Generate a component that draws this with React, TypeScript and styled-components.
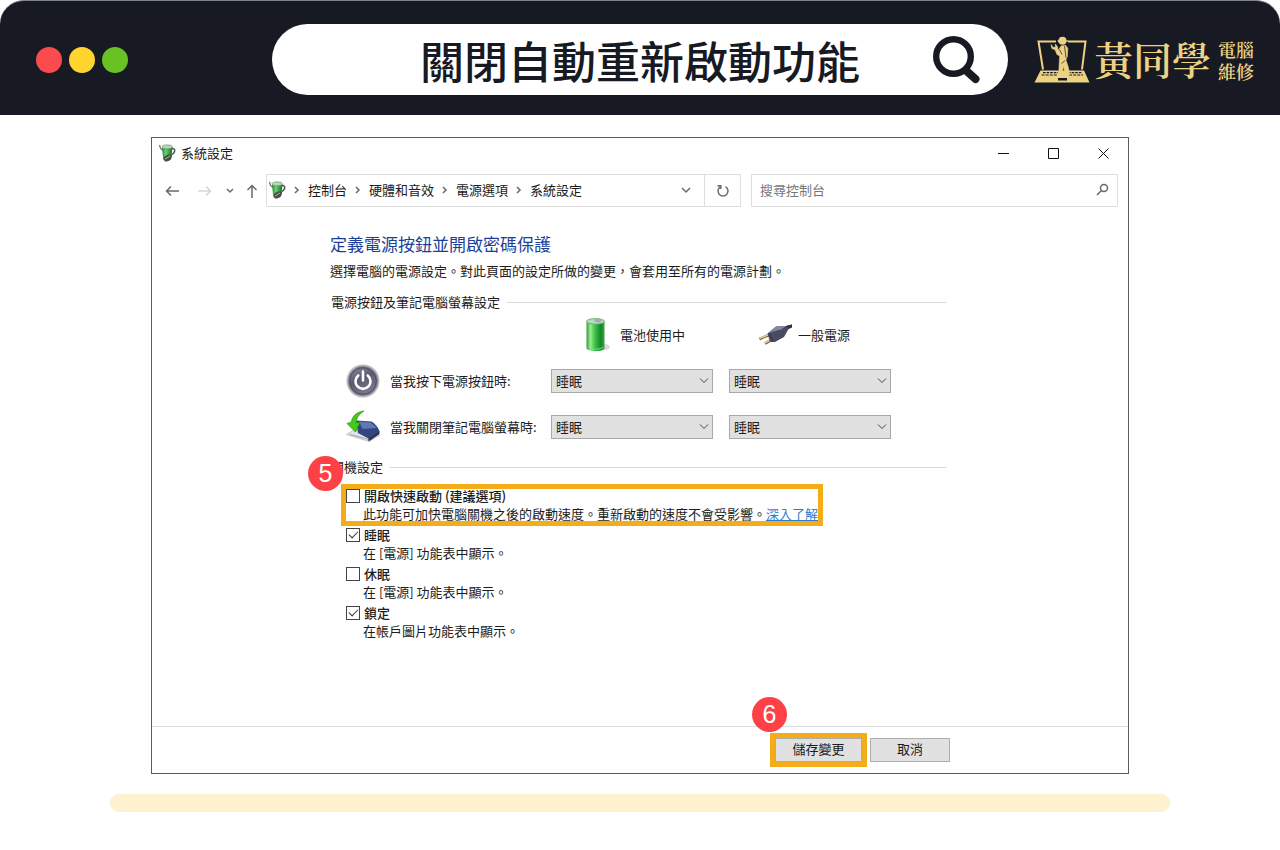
import React, { useId, useState } from "react";
import styled, { createGlobalStyle, css } from "styled-components";

const ink = "#171a23";
const gold = "#ecd282";
const amber = "#f4ac18";

const GlobalStyle = createGlobalStyle`
  *, *::before, *::after { box-sizing: border-box; }
  body {
    margin: 0;
    background: #fff;
    color: #1c1c1c;
    font: 13px/18px "Noto Sans CJK TC", "Liberation Sans", sans-serif;
  }
  h1, h2, p { margin: 0; font-weight: 400; }
  button, input, select { font: inherit; color: inherit; margin: 0; }
  svg { display: block; flex: none; }
`;

/* ---------- page banner ---------- */

const Banner = styled.header`
  display: flex;
  align-items: center;
  height: 115px;
  padding: 3px 26px 0 36px;
  background: ${ink};
  border-top: 1px solid #7b838b;
  border-radius: 24px 24px 0 0;
`;

const Lights = styled.div`
  display: flex;
  gap: 7px;
  margin-right: 144px;
`;

const Light = styled.span<{ $color: string }>`
  width: 26px;
  height: 26px;
  border-radius: 50%;
  background: ${(p) => p.$color};
`;

const SearchPill = styled.form`
  display: flex;
  align-items: center;
  flex: 1;
  min-width: 0;
  height: 71px;
  margin-right: 26px;
  padding: 0 28px 0 75px;
  background: #fff;
  border-radius: 36px;
`;

const PillInput = styled.input`
  flex: 1;
  min-width: 0;
  height: 64px;
  padding: 0;
  border: 0;
  outline: 0;
  background: transparent;
  color: ${ink};
  font-size: 44px;
  font-weight: 500;
  line-height: 64px;
  text-align: center;
`;

const PlainButton = styled.button`
  display: flex;
  align-items: center;
  justify-content: center;
  padding: 0;
  border: 0;
  background: none;
`;

const Brand = styled.a`
  display: flex;
  align-items: center;
  gap: 4px;
  color: ${gold};
  font-family: "Liberation Serif", "Noto Serif CJK TC", "Noto Sans CJK TC", serif;
  font-weight: 600;
  text-decoration: none;
  white-space: nowrap;
`;

const BrandName = styled.span`
  padding-top: 4px;
  font-size: 39px;
  line-height: 48px;
`;

const BrandTag = styled.span`
  display: flex;
  flex-direction: column;
  margin-left: 3px;
  padding-top: 4px;
  font-size: 18px;
  line-height: 22px;
`;

/* ---------- window ---------- */

const Window = styled.main`
  margin: 22px 151px 0;
  border: 1px solid #5c5c5c;
  background: #fff;
`;

const TitleBar = styled.div`
  display: flex;
  align-items: center;
  gap: 5px;
  height: 30px;
  padding-left: 7px;
`;

const WindowTitle = styled.span`
  flex: 1;
`;

const CaptionButtons = styled.div`
  display: flex;
`;

const CaptionButton = styled(PlainButton)`
  width: 50px;
  height: 30px;
`;

const NavBar = styled.nav`
  display: grid;
  grid-template-columns: 112px 485fr 367fr;
  height: 33px;
  margin: 6px 10px 0 2px;
`;

const NavButtons = styled.div`
  display: grid;
  grid-template-columns: 36px 30px 20px 24px;
`;

const AddressBox = styled.div`
  display: flex;
  min-width: 0;
  margin-right: 10px;
  border: 1px solid #dedede;
`;

const Crumbs = styled.ol`
  display: flex;
  align-items: center;
  flex: 1;
  min-width: 0;
  margin: 0;
  padding: 0 0 2px 2px;
  list-style: none;
  white-space: nowrap;
`;

const Crumb = styled.li`
  display: flex;
  align-items: center;

  a { color: inherit; text-decoration: none; }
`;

const CrumbArrow = styled.span`
  display: flex;
  justify-content: center;
  width: 22px;
`;

const AddressButton = styled(PlainButton)<{ $divided?: boolean }>`
  width: 36px;
  ${(p) => p.$divided && css`border-left: 1px solid #dedede;`}
`;

const FindBox = styled.label`
  display: flex;
  align-items: center;
  min-width: 0;
  padding: 0 8px 2px;
  border: 1px solid #dedede;
`;

const FindInput = styled.input`
  flex: 1;
  min-width: 0;
  padding: 0;
  border: 0;
  outline: 0;
  background: none;

  &::placeholder { color: #777; opacity: 1; }
`;

const Content = styled.div`
  max-width: 794px;
  padding: 25px 0 86px 178px;
`;

const PageTitle = styled.h1`
  color: #1e3f98;
  font-size: 17px;
  line-height: 24px;
`;

const Lead = styled.p`
  margin: 6px 0 13px;
`;

const GroupTitle = styled.h2`
  display: flex;
  align-items: center;
  gap: 7px;
  padding-left: 1px;
  font-size: 13px;
  line-height: 18px;

  &::after {
    content: "";
    flex: 1;
    height: 1px;
    background: #d9d9d9;
  }
`;

const ActionGrid = styled.div`
  display: grid;
  grid-template-columns: 189px 162px 162px;
  column-gap: 16px;
  row-gap: 12px;
  margin: 7px 0 14px 16px;
`;

const SourceHead = styled.div`
  display: flex;
  align-items: center;
  gap: 6px;
  height: 34px;
  padding-left: 29px;
  white-space: nowrap;
`;

const ActionLabel = styled.div`
  display: flex;
  align-items: center;
  gap: 10px;
  height: 34px;
  white-space: nowrap;
`;

const SelectBox = styled.div`
  position: relative;
  align-self: center;

  svg {
    position: absolute;
    top: 9px;
    right: 4px;
    pointer-events: none;
  }
`;

const Select = styled.select`
  display: block;
  width: 100%;
  height: 24px;
  padding: 0 20px 1px 4px;
  border: 1px solid #a8a8a8;
  border-radius: 0;
  appearance: none;
  background: #e1e1e1;
  line-height: 18px;
`;

const OptionList = styled.div`
  display: flex;
  flex-direction: column;
  align-items: flex-start;
  gap: 3px;
  margin: 11px 0 0 16px;
`;

const Option = styled.div<{ $marked?: boolean }>`
  position: relative;
  white-space: nowrap;

  ${(p) => p.$marked && css`
    &::after {
      content: "";
      position: absolute;
      inset: -3px -5px;
      border: 5px solid ${amber};
      pointer-events: none;
    }
  `}
`;

const OptionLabel = styled.label`
  display: flex;
  align-items: center;
  gap: 4px;
  font-weight: 500;
`;

const Tick = styled.input`
  display: grid;
  place-content: center;
  width: 14px;
  height: 14px;
  appearance: none;
  border: 1px solid #444;
  background: #fff;

  &:checked::before {
    content: "";
    width: 9px;
    height: 5px;
    margin-bottom: 3px;
    border: solid #333;
    border-width: 0 0 1px 1px;
    transform: rotate(-45deg);
  }
`;

const OptionNote = styled.p`
  padding-left: 17px;

  a { color: #2b7cd3; }
`;

const Footer = styled.footer`
  border-top: 1px solid #dcdcdc;
`;

const FooterButtons = styled.div`
  display: flex;
  justify-content: flex-end;
  gap: 8px;
  max-width: 798px;
  padding: 11px 0;
`;

const Marked = styled.div`
  position: relative;

  &::after {
    content: "";
    position: absolute;
    inset: -5px;
    border: 5px solid ${amber};
    pointer-events: none;
  }
`;

const PushButton = styled.button<{ $wide?: boolean }>`
  display: block;
  width: ${(p) => (p.$wide ? 87 : 80)}px;
  height: 24px;
  padding: 0 0 2px;
  border: 1px solid #adadad;
  background: #e1e1e1;
  line-height: 18px;
`;

const Step = styled.span<{ $top: number; $left: number }>`
  position: absolute;
  z-index: 1;
  top: ${(p) => p.$top}px;
  left: ${(p) => p.$left}px;
  width: 35px;
  height: 35px;
  border-radius: 50%;
  background: #fe4147;
  color: #fff;
  font: 25px/35px "Liberation Sans", sans-serif;
  text-align: center;
`;

const Underline = styled.div`
  height: 18px;
  margin: 20px 110px 0;
  border-radius: 9px;
  background: #fef1d0;
`;

/* ---------- drawings ---------- */

const MagnifierIcon = () => (
  <svg width="47" height="48" viewBox="0 0 47 48" fill="none" stroke={ink} aria-hidden="true">
    <circle cx="20.5" cy="20.5" r="17.3" strokeWidth="6.4" />
    <path d="M33 34.500L42.500 43" strokeWidth="8" strokeLinecap="round" />
  </svg>
);

const LaptopLogo = () => (
  <svg width="56" height="48" viewBox="0 0 56 48" aria-hidden="true">
    <path d="M22 5.500H4.500L9 33.500M34 5.500H51.500L48 33.500" fill="none" stroke={gold} strokeWidth="2" />
    <path d="M6.500 34.500H50L55.500 46.500H0.500Z" fill={gold} />
    <g stroke={ink} strokeWidth="1.200" fill="none">
      <path d="M9 36.700H24M34 36.700H48" strokeDasharray="2.600 1" />
      <path d="M7.500 39H23M35 39H49" strokeDasharray="3 1.100" />
    </g>
    <path d="M24 42h9v2.500h-9z" fill={ink} />
    <circle cx="28.500" cy="4.700" r="4" fill={gold} />
    <path d="M23.500 4.200h10l1.500 1.200-11 .8z" fill={gold} />
    <path d="M17 8.500l2.500 3 2-.5-.2-3 2 2.400.8 4 3-4.500 4.500-.6 2.200 3-.5 8.500-1.500 3 2.400 7 1.600 8-3.500.8-3.200-9-1 9.400-3.400.5.500-13 .5-7.500-2.800-1.600-1.800-4.600-3.200-1.300z" fill={gold} stroke={gold} strokeWidth=".6" />
    <path d="M25.500 13.500l2.500 5M30.500 10l1.500 12M27.500 27.500l3.500-3" stroke={ink} strokeWidth=".7" fill="none" />
  </svg>
);

const PowerOptionsIcon = () => {
  const id = useId();
  return (
    <svg width="17" height="18" viewBox="0 0 17 18" aria-hidden="true">
      <defs>
        <linearGradient id={id}>
          <stop offset="0" stopColor="#257c35" />
          <stop offset=".35" stopColor="#65d76b" />
          <stop offset="1" stopColor="#1b6428" />
        </linearGradient>
      </defs>
      <path d="M.5 1l1 3.500 2.500 2" fill="none" stroke="#65706a" strokeWidth="1.200" />
      <path d="M12.500 4.500c4.500-1 4 4.500.2 6" fill="none" stroke="#4c5b52" strokeWidth="1.500" />
      <path d="M3 3l1.200 12c1.600 2.500 6.500 2.500 8 0L13.500 3z" fill={`url(#${id})`} />
      <ellipse cx="8.200" cy="2.800" rx="5.200" ry="2" fill="#c3cec5" stroke="#4b9d54" strokeWidth=".6" />
      <path d="M4.500 15.500c.2-4 4-4.500 5.500-5.200l3 .7c-.2 4.500-3.500 7-7 6.500z" fill="#46513f" />
      <path d="M6 15l5-3" stroke="#a9b59a" strokeWidth="1" />
    </svg>
  );
};

const BatteryIcon = () => {
  const id = useId();
  return (
    <svg width="34" height="34" viewBox="0 0 34 34" aria-hidden="true">
      <defs>
        <linearGradient id={id}>
          <stop offset="0" stopColor="#2f9e3d" />
          <stop offset=".22" stopColor="#9bec95" />
          <stop offset=".45" stopColor="#42c44b" />
          <stop offset=".8" stopColor="#168527" />
          <stop offset="1" stopColor="#3aa646" />
        </linearGradient>
      </defs>
      <ellipse cx="22" cy="29" rx="8" ry="3.500" fill="#d9dcd9" />
      <path d="M6.500 3v27.500c1.500 3.500 16 3.500 18 0V3z" fill={`url(#${id})`} />
      <ellipse cx="15.500" cy="3.400" rx="9" ry="2.800" fill="#b5ddb5" stroke="#58a861" strokeWidth=".8" />
      <ellipse cx="18" cy="2.600" rx="3.600" ry="1.800" fill="#a9a7bd" />
      <path d="M8 29c2 3 13 3 15 0" fill="none" stroke="#7adf78" strokeWidth="1" />
    </svg>
  );
};

const PlugIcon = () => (
  <svg width="34" height="34" viewBox="0 0 34 34" aria-hidden="true">
    <path d="M1.500 21L12 16.500M7 25.500L16 20.500" stroke="#6b5432" strokeWidth="2.600" />
    <path d="M1.500 20.500L12 16M7 25L16 20" stroke="#e9c690" strokeWidth="1.800" />
    <path d="M9.500 15.500L18 8.500 28 8l6-1.500.5 2.500-4 2-4.500 8-9 5-5 0z" fill="#494b61" />
    <path d="M10 15.500L18 8.500l10-.5-5 3.500-8 2z" fill="#8488a2" />
    <path d="M11 15l4 8" stroke="#2f3144" strokeWidth="1" />
    <path d="M28 8l6-1.500.5 2.500-4 2z" fill="#303240" />
  </svg>
);

const PowerButtonIcon = () => {
  const id = useId();
  return (
    <svg width="34" height="34" viewBox="0 0 34 34" aria-hidden="true">
      <defs>
        <linearGradient id={id} x2="0.5" y2="1">
          <stop offset="0" stopColor="#8b8a9c" />
          <stop offset=".5" stopColor="#5c5b72" />
          <stop offset="1" stopColor="#77768e" />
        </linearGradient>
      </defs>
      <circle cx="17" cy="17" r="16.500" fill="#b9b9bd" />
      <circle cx="17" cy="17" r="14.800" fill="#737288" />
      <circle cx="17" cy="17" r="13.300" fill={`url(#${id})`} stroke="#484759" strokeWidth=".8" />
      <path d="M12.300 11.500a7.500 7.500 0 1 0 9.400 0M17 7.500v9" fill="none" stroke="#fff" strokeWidth="2.600" strokeLinecap="round" />
    </svg>
  );
};

const LidIcon = () => (
  <svg width="34" height="34" viewBox="0 0 34 34" aria-hidden="true">
    <path d="M.5 24.500L8 20l22 3 3.500 2.500-10.500 6z" fill="#dfe2e7" stroke="#a4a8b0" strokeWidth=".6" />
    <path d="M4 24.500l19 5" stroke="#a0a5ae" strokeWidth="1" />
    <path d="M22.500 31.500L33.500 24v-3L22.500 28z" fill="#25304c" />
    <path d="M10 10.500l15.500 1c3 1.500 6.500 5.500 8 10L22.500 28.500 12 23z" fill="#33457d" />
    <path d="M13 11.500l12 1 5.500 5.500-14 1z" fill="#5f78b5" />
    <path d="M18 1C10 2 6 6.500 5.500 12L1 13.500l8.500 8.500L14 12.500l-4 .2C10.500 8 13 4 18 1z" fill="#47c719" stroke="#269907" strokeWidth=".7" />
  </svg>
);

type LineProps = { d: string; w?: number; h?: number; color?: string; weight?: number };

const LineIcon = ({ d, w = 14, h = 14, color = "#6a6a6a", weight = 1.5 }: LineProps) => (
  <svg width={w} height={h} viewBox={`0 0 ${w} ${h}`} fill="none" stroke={color} strokeWidth={weight} aria-hidden="true">
    <path d={d} />
  </svg>
);

/* ---------- parts ---------- */

const choices = ["睡眠", "不執行任何動作", "休眠", "關機"];

const SleepSelect = ({ label }: { label: string }) => (
  <SelectBox>
    <Select aria-label={label} defaultValue="睡眠">
      {choices.map((c) => (
        <option key={c}>{c}</option>
      ))}
    </Select>
    <LineIcon w={10} h={6} d="M1 .5l4 4 4-4" color="#444" weight={1} />
  </SelectBox>
);

type ShutdownProps = { title: string; checked?: boolean; marked?: boolean; children: React.ReactNode };

const ShutdownOption = ({ title, checked = false, marked, children }: ShutdownProps) => {
  const [on, setOn] = useState(checked);
  return (
    <Option $marked={marked}>
      {marked && <Step $top={-31} $left={-38}>5</Step>}
      <OptionLabel>
        <Tick type="checkbox" checked={on} onChange={(e) => setOn(e.target.checked)} />
        {title}
      </OptionLabel>
      <OptionNote>{children}</OptionNote>
    </Option>
  );
};

const crumbs = ["控制台", "硬體和音效", "電源選項", "系統設定"];

export default function App() {
  return (
    <div lang="zh-Hant">
      <GlobalStyle />
      <Banner>
        <Lights>
          <Light $color="#fa4b4e" />
          <Light $color="#ffd42e" />
          <Light $color="#68c223" />
        </Lights>
        <SearchPill onSubmit={(e) => e.preventDefault()}>
          <PillInput aria-label="搜尋" defaultValue="關閉自動重新啟動功能" />
          <PlainButton type="submit" aria-label="搜尋">
            <MagnifierIcon />
          </PlainButton>
        </SearchPill>
        <Brand href="#">
          <LaptopLogo />
          <BrandName>黃同學</BrandName>
          <BrandTag>
            <span>電腦</span>
            <span>維修</span>
          </BrandTag>
        </Brand>
      </Banner>

      <Window>
        <TitleBar>
          <PowerOptionsIcon />
          <WindowTitle>系統設定</WindowTitle>
          <CaptionButtons>
            <CaptionButton aria-label="最小化">
              <LineIcon w={11} h={11} d="M0 5.500h11" color="#111" weight={1} />
            </CaptionButton>
            <CaptionButton aria-label="最大化">
              <LineIcon w={11} h={11} d="M.5.5h10v10H.5z" color="#111" weight={1} />
            </CaptionButton>
            <CaptionButton aria-label="關閉">
              <LineIcon w={11} h={11} d="M.5.5l10 10M10.500.5l-10 10" color="#111" weight={1} />
            </CaptionButton>
          </CaptionButtons>
        </TitleBar>

        <NavBar>
          <NavButtons>
            <PlainButton aria-label="上一頁">
              <LineIcon d="M14 7H1.500M6 2.500L1.500 7 6 11.500" />
            </PlainButton>
            <PlainButton aria-label="下一頁">
              <LineIcon d="M0 7h12.500M8 2.500L12.500 7 8 11.500" color="#d6d6d6" />
            </PlainButton>
            <PlainButton aria-label="最近的位置">
              <LineIcon w={8} h={6} d="M1 1l3 3 3-3" />
            </PlainButton>
            <PlainButton aria-label="上一層">
              <LineIcon d="M7 14V1.500M2.500 6L7 1.500 11.500 6" />
            </PlainButton>
          </NavButtons>
          <AddressBox>
            <Crumbs>
              <Crumb>
                <PowerOptionsIcon />
              </Crumb>
              {crumbs.map((c) => (
                <Crumb key={c}>
                  <CrumbArrow>
                    <LineIcon w={6} h={8} d="M1 1l3 3-3 3" />
                  </CrumbArrow>
                  <a href="#">{c}</a>
                </Crumb>
              ))}
            </Crumbs>
            <AddressButton aria-label="先前的位置">
              <LineIcon w={10} h={7} d="M1 1l4 4 4-4" />
            </AddressButton>
            <AddressButton $divided aria-label="重新整理">
              <LineIcon d="M9.500 2.600A5 5 0 1 1 4.500 2.600M1.500 1.800h3.300V5" />
            </AddressButton>
          </AddressBox>
          <FindBox>
            <FindInput type="text" aria-label="搜尋控制台" placeholder="搜尋控制台" />
            <LineIcon w={13} h={13} d="M8 1.500a3.500 3.500 0 1 1 0 7 3.500 3.500 0 0 1 0-7M5.500 7.500L1 12" />
          </FindBox>
        </NavBar>

        <Content>
          <PageTitle>定義電源按鈕並開啟密碼保護</PageTitle>
          <Lead>選擇電腦的電源設定。對此頁面的設定所做的變更，會套用至所有的電源計劃。</Lead>

          <GroupTitle>電源按鈕及筆記電腦螢幕設定</GroupTitle>
          <ActionGrid>
            <span />
            <SourceHead>
              <BatteryIcon />
              電池使用中
            </SourceHead>
            <SourceHead>
              <PlugIcon />
              一般電源
            </SourceHead>

            <ActionLabel>
              <PowerButtonIcon />
              當我按下電源按鈕時:
            </ActionLabel>
            <SleepSelect label="當我按下電源按鈕時: 電池使用中" />
            <SleepSelect label="當我按下電源按鈕時: 一般電源" />

            <ActionLabel>
              <LidIcon />
              當我關閉筆記電腦螢幕時:
            </ActionLabel>
            <SleepSelect label="當我關閉筆記電腦螢幕時: 電池使用中" />
            <SleepSelect label="當我關閉筆記電腦螢幕時: 一般電源" />
          </ActionGrid>

          <GroupTitle>關機設定</GroupTitle>
          <OptionList>
            <ShutdownOption title="開啟快速啟動 (建議選項)" marked>
              此功能可加快電腦關機之後的啟動速度。重新啟動的速度不會受影響。<a href="#">深入了解</a>
            </ShutdownOption>
            <ShutdownOption title="睡眠" checked>在 [電源] 功能表中顯示。</ShutdownOption>
            <ShutdownOption title="休眠">在 [電源] 功能表中顯示。</ShutdownOption>
            <ShutdownOption title="鎖定" checked>在帳戶圖片功能表中顯示。</ShutdownOption>
          </OptionList>
        </Content>

        <Footer>
          <FooterButtons>
            <Marked>
              <Step $top={-41} $left={-23}>6</Step>
              <PushButton $wide>儲存變更</PushButton>
            </Marked>
            <PushButton>取消</PushButton>
          </FooterButtons>
        </Footer>
      </Window>

      <Underline />
    </div>
  );
}
